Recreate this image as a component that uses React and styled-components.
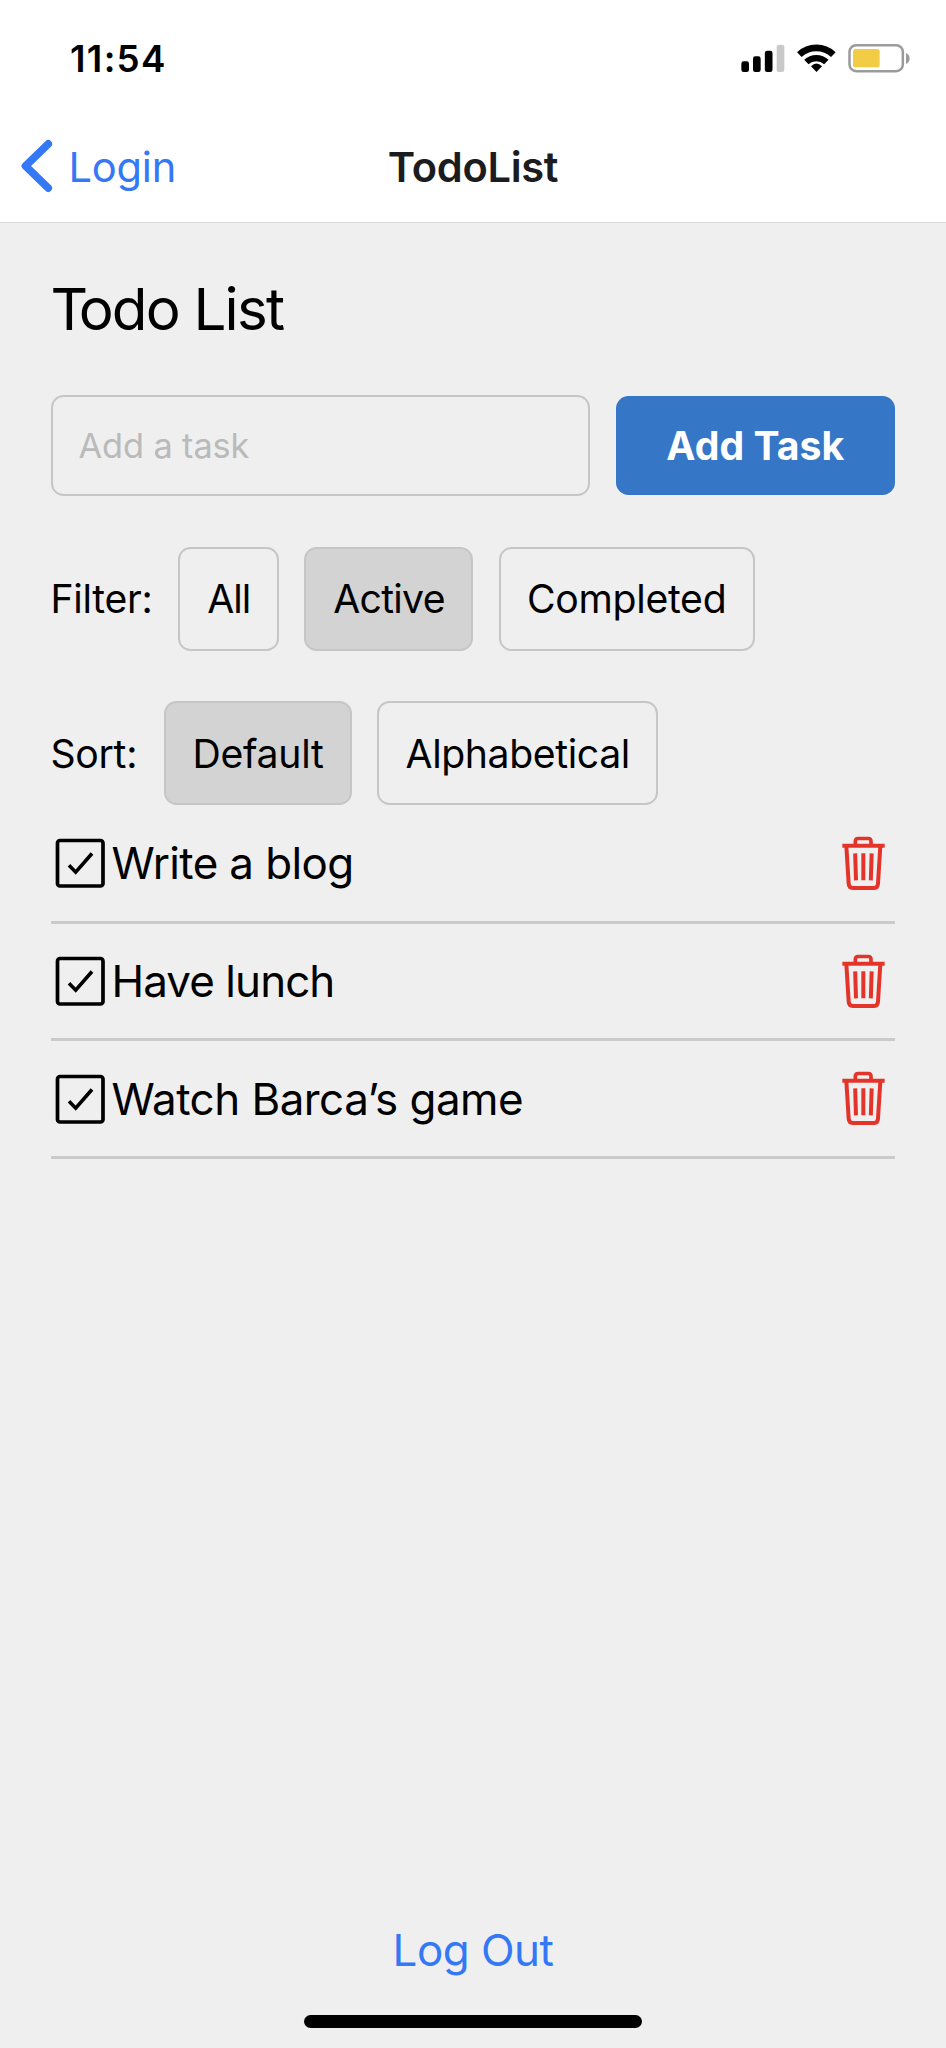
import React from "react";
import styled, { createGlobalStyle } from "styled-components";

const GlobalStyle = createGlobalStyle`
  *, *::before, *::after { box-sizing: border-box; }
  body {
    margin: 0;
    background: #efefef;
    font-family: Inter, "Liberation Sans", sans-serif;
    color: #000;
  }
  button, input { font-family: inherit; color: inherit; }
`;

const Screen = styled.div`
  display: flex;
  flex-direction: column;
  width: 946px;
  height: 2048px;
  overflow: hidden;
  background: #efefef;
`;

const StatusBar = styled.header`
  display: flex;
  align-items: center;
  justify-content: space-between;
  height: 116px;
  padding: 0 34px 0 70px;
  background: #fff;
`;

const Time = styled.span`
  font-size: 36.7px;
  font-weight: 600;
  letter-spacing: 1.3px;
`;

const NavBar = styled.nav`
  display: grid;
  grid-template-columns: 1fr auto 1fr;
  align-items: center;
  height: 107px;
  padding: 0 20px 4px;
  background: #fff;
  border-bottom: 1px solid #d8d8d8;
`;

const BackButton = styled.button`
  display: flex;
  align-items: center;
  gap: 15.5px;
  padding: 0;
  border: 0;
  background: none;
  color: #3478f6;
  font-size: 41.6px;
  letter-spacing: -0.2px;
`;

const NavTitle = styled.h1`
  margin: 0;
  font-size: 41.6px;
  font-weight: 600;
  letter-spacing: -0.3px;
  color: #1c1c1e;
`;

const Content = styled.main`
  display: flex;
  flex: 1;
  flex-direction: column;
  padding: 51px 51px 0 50.5px;
`;

const Heading = styled.h2`
  margin: 0 0 50px;
  font-size: 58.3px;
  font-weight: 400;
  line-height: 71px;
  letter-spacing: -1.8px;
`;

const Initial = styled.span`
  letter-spacing: -9.5px;
`;

const AddRow = styled.form`
  display: flex;
  align-items: center;
  gap: 25.5px;
  height: 101px;
  margin-bottom: 50.5px;
`;

const TaskInput = styled.input`
  flex: 1;
  min-width: 0;
  height: 101px;
  padding: 0 26px;
  border: 2.5px solid #c6c6c6;
  border-radius: 12.5px;
  background: transparent;
  font-size: 34.3px;
  letter-spacing: -0.1px;
  outline: none;
  &::placeholder { color: #bababa; opacity: 1; }
`;

const AddButton = styled.button`
  width: 279.5px;
  height: 99px;
  padding: 0;
  border: 0;
  border-radius: 12.5px;
  background: #3577c6;
  color: #fff;
  font-size: 39.2px;
  font-weight: 700;
`;

const OptionRow = styled.div`
  display: flex;
  align-items: center;
  height: 104px;
  margin-bottom: ${(p) => (p.$last ? 1 : 50.5)}px;
  font-size: 39.2px;
  letter-spacing: -0.3px;
`;

const OptionLabel = styled.span`
  width: ${(p) => p.$width}px;
`;

const Chips = styled.div`
  display: flex;
  gap: 25.2px;
`;

const Chip = styled.button`
  width: ${(p) => p.$width}px;
  height: 104px;
  padding: 0;
  border: 2.5px solid #c6c6c6;
  border-radius: 12.5px;
  background: ${(p) => (p.$selected ? "#d3d3d3" : "transparent")};
  font-size: 39.2px;
  letter-spacing: ${(p) => p.$track}px;
`;

const TaskList = styled.ul`
  margin: 0;
  padding: 0;
  list-style: none;
`;

const Task = styled.li`
  display: flex;
  align-items: center;
  height: 117.7px;
  padding: 0 10px 0 4.5px;
  border-bottom: 3px solid #cacaca;
`;

const TaskText = styled.span`
  flex: 1;
  padding-left: 6.5px;
  font-size: 43.9px;
  letter-spacing: ${(p) => p.$track}px;
`;

const IconButton = styled.button`
  display: flex;
  padding: 0;
  border: 0;
  background: none;
`;

const Footer = styled.footer`
  display: flex;
  flex-direction: column;
  align-items: center;
  padding-bottom: 20px;
`;

const LogOut = styled.button`
  margin-bottom: 35px;
  padding: 0;
  border: 0;
  background: none;
  color: #3478f6;
  font-size: 43.9px;
  line-height: 60px;
  letter-spacing: -0.5px;
`;

const HomeIndicator = styled.div`
  width: 338px;
  height: 13px;
  border-radius: 7px;
  background: #000;
`;

const StatusIcons = () => (
  <svg width="172" height="32" viewBox="120 65 516 96" fill="none">
    <rect x="124" y="123" width="23" height="32" rx="7" fill="#000" />
    <rect x="159" y="108" width="23" height="47" rx="7" fill="#000" />
    <rect x="194.500" y="91" width="23" height="64" rx="7" fill="#000" />
    <rect x="230" y="73" width="23" height="82" rx="7" fill="#c9c9c9" />
    <path d="M298 103 A74 74 0 0 1 400 103" stroke="#000" strokeWidth="20" />
    <path d="M319 125 A44 44 0 0 1 379 125" stroke="#000" strokeWidth="19" />
    <path d="M333 138 Q349 121 366 138 L349.500 155 Z" fill="#000" />
    <rect x="448.500" y="74.500" width="160" height="78" rx="20" stroke="#9b9b9b" strokeWidth="7.500" />
    <rect x="459" y="86" width="80" height="55" rx="8" fill="#f3cc46" />
    <path d="M618 98 Q629 103 629 114.500 Q629 126 618 131 Z" fill="#9b9b9b" />
  </svg>
);

const BackArrow = styled.svg`
  margin-top: -3px;
`;

const BackIcon = () => (
  <BackArrow width="33" height="54" viewBox="0 0 33 54" fill="none">
    <path d="M28.200 5 L5.500 27 L28.200 49" stroke="#3478f6" strokeWidth="7.800" strokeLinecap="round" strokeLinejoin="round" />
  </BackArrow>
);

const CheckIcon = () => (
  <svg width="50" height="50" viewBox="0 0 50 50" fill="none" stroke="#000">
    <rect x="2.500" y="2.500" width="45.500" height="45.500" rx="2.500" strokeWidth="3.700" />
    <path d="M14 27.300 L20.700 34.200 L37 15.500" strokeWidth="3.600" />
  </svg>
);

const TrashIcon = () => (
  <svg width="43" height="55" viewBox="126 79 129 165" fill="none" stroke="#e4342a">
    <path d="M166 107 V95 Q166 86.500 174 86.500 H205 Q213 86.500 213 95 V107" strokeWidth="11" />
    <path d="M127 108 H254" strokeWidth="12" />
    <path d="M139 109 L146 222 Q147 235 158 235 H223 Q233 235 234 222 L241 109" strokeWidth="12" />
    <path d="M165.500 131 L168 212 M190 131 V212 M215 131 L212.500 212" strokeWidth="12" />
  </svg>
);

const filters = [
  { label: "All", width: 101, track: -0.9 },
  { label: "Active", width: 169, selected: true, track: -0.7 },
  { label: "Completed", width: 256, track: -0.3 },
];
const sorts = [
  { label: "Default", width: 188, selected: true, track: -0.3 },
  { label: "Alphabetical", width: 281, track: -0.4 },
];
const tasks = [
  { text: "Write a blog", track: -0.6 },
  { text: "Have lunch", track: -0.9 },
  { text: "Watch Barca’s game", track: -0.5 },
];

function OptionGroup({ label, labelWidth, options, last }) {
  return (
    <OptionRow $last={last}>
      <OptionLabel $width={labelWidth}>{label}</OptionLabel>
      <Chips>
        {options.map((o) => (
          <Chip key={o.label} $width={o.width} $selected={o.selected} $track={o.track}>
            {o.label}
          </Chip>
        ))}
      </Chips>
    </OptionRow>
  );
}

export default function App() {
  return (
    <Screen>
      <GlobalStyle />
      <StatusBar>
        <Time>11:54</Time>
        <StatusIcons />
      </StatusBar>
      <NavBar>
        <BackButton>
          <BackIcon />
          Login
        </BackButton>
        <NavTitle>TodoList</NavTitle>
      </NavBar>
      <Content>
        <Heading>
          <Initial>T</Initial>odo List
        </Heading>
        <AddRow>
          <TaskInput placeholder="Add a task" />
          <AddButton type="button">Add Task</AddButton>
        </AddRow>
        <OptionGroup label="Filter:" labelWidth={127.8} options={filters} />
        <OptionGroup label="Sort:" labelWidth={113.5} options={sorts} last />
        <TaskList>
          {tasks.map((t) => (
            <Task key={t.text}>
              <CheckIcon />
              <TaskText $track={t.track}>{t.text}</TaskText>
              <IconButton aria-label="Delete">
                <TrashIcon />
              </IconButton>
            </Task>
          ))}
        </TaskList>
      </Content>
      <Footer>
        <LogOut>Log Out</LogOut>
        <HomeIndicator />
      </Footer>
    </Screen>
  );
}
